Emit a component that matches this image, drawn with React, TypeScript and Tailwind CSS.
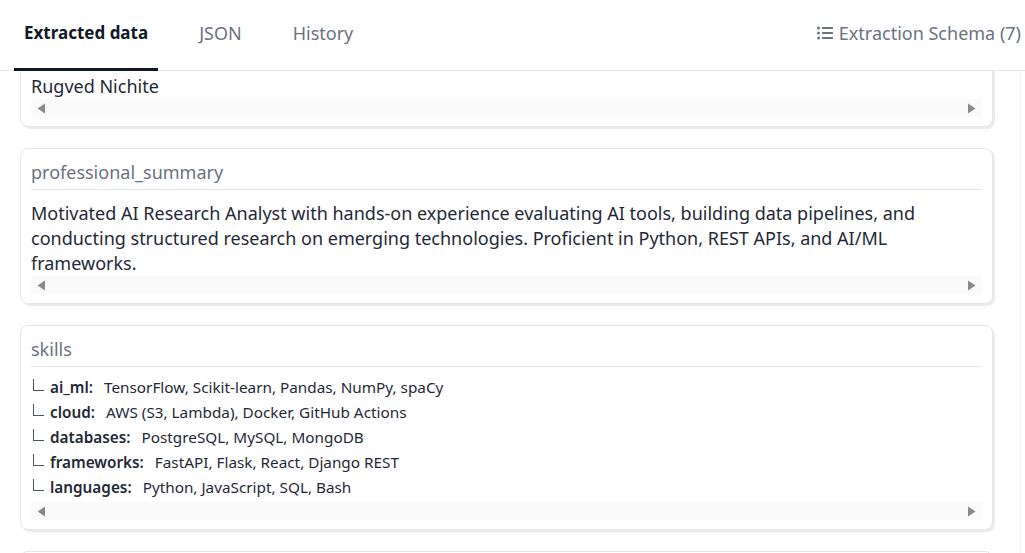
import React from "react";

const font = { fontFamily: '"Noto Sans", "Open Sans", sans-serif' };

function ScrollBar() {
  return (
    <div className="flex h-[18px] items-center justify-between bg-[#fafafa] px-[6px]">
      <svg width="9" height="11" viewBox="0 0 9 11">
        <path d="M8 0.5 L0.5 5.5 L8 10.5 Z" fill="#8a8a8a" />
      </svg>
      <svg width="9" height="11" viewBox="0 0 9 11">
        <path d="M1 0.5 L8.5 5.5 L1 10.5 Z" fill="#8a8a8a" />
      </svg>
    </div>
  );
}

function Card({ label, children }: { label?: string; children: React.ReactNode }) {
  return (
    <div className="rounded-[8px] border border-[#e5e7eb] bg-white px-[10px] shadow-[2px_2px_0px_#ebebeb]">
      {label && (
        <div className="border-b border-[#e5e7eb] pt-[12px] pb-[6px] text-[18px] leading-[22px] text-[#6b7280]">
          {label}
        </div>
      )}
      {children}
      <ScrollBar />
      <div className="h-[9px]" />
    </div>
  );
}

const skills: [string, string][] = [
  ["ai_ml", "TensorFlow, Scikit-learn, Pandas, NumPy, spaCy"],
  ["cloud", "AWS (S3, Lambda), Docker, GitHub Actions"],
  ["databases", "PostgreSQL, MySQL, MongoDB"],
  ["frameworks", "FastAPI, Flask, React, Django REST"],
  ["languages", "Python, JavaScript, SQL, Bash"],
];

export default function App() {
  return (
    <div className="h-[553px] w-[1025px] overflow-hidden bg-white" style={font}>
      <div className="flex h-[71px] items-end justify-between border-b border-[#e5e7eb] pl-[14px] pr-[4px]">
        <div className="flex gap-[31px]">
          <div className="mb-[-1px] border-b-[3px] border-[#111827] px-[10px] pb-[23px] text-[17px] leading-[24px] font-bold text-[#111827]">
            Extracted data
          </div>
          <div className="px-[10px] pb-[25px] text-[18px] leading-[24px] text-[#6b7280]">JSON</div>
          <div className="px-[10px] pb-[25px] text-[18px] leading-[24px] text-[#6b7280]">History</div>
        </div>
        <div className="flex items-center gap-[6px] pb-[25px] text-[18px] leading-[24px] text-[#6b7280]">
          <svg width="16" height="14" viewBox="0 0 16 14">
            <circle cx="1.5" cy="2" r="1.5" fill="#6b7280" />
            <circle cx="1.5" cy="7" r="1.5" fill="#6b7280" />
            <circle cx="1.5" cy="12" r="1.5" fill="#6b7280" />
            <rect x="5" y="1" width="11" height="2" rx="0.5" fill="#6b7280" />
            <rect x="5" y="6" width="11" height="2" rx="0.5" fill="#6b7280" />
            <rect x="5" y="11" width="11" height="2" rx="0.5" fill="#6b7280" />
          </svg>
          <span>Extraction Schema (7)</span>
        </div>
      </div>
      <div className="relative h-[482px] overflow-hidden">
        <div className="-mt-[43px] flex flex-col gap-[21px] pl-[20px] pr-[32px]">
          <Card label="name">
            <div className="pt-[4px] text-[18px] leading-[25px] text-[#1f2937]">Rugved Nichite</div>
          </Card>
          <Card label="professional_summary">
            <div className="pt-[11px] text-[18px] leading-[25px] text-[#1f2937]">
              Motivated AI Research Analyst with hands-on experience evaluating AI tools, building data pipelines, and
              conducting structured research on emerging technologies. Proficient in Python, REST APIs, and AI/ML
              frameworks.
            </div>
          </Card>
          <Card label="skills">
            <div className="pt-[8px] pb-[2px]">
              {skills.map(([k, v]) => (
                <div key={k} className="flex items-center text-[15.3px] leading-[25px] text-[#1f2937]">
                  <span className="ml-[2px] mb-[5px] inline-block h-[12px] w-[11px] border-b-[1.5px] border-l-[1.5px] border-[#4b5563]" />
                  <span className="ml-[6px] font-semibold">{k}:</span>
                  <span className="ml-[11px]">{v}</span>
                </div>
              ))}
            </div>
          </Card>
          <Card label="experience">
            <div className="h-[60px]" />
          </Card>
        </div>
        <div className="absolute right-[4px] top-0 h-[482px] w-px bg-[#f3f4f6]" />
      </div>
    </div>
  );
}
